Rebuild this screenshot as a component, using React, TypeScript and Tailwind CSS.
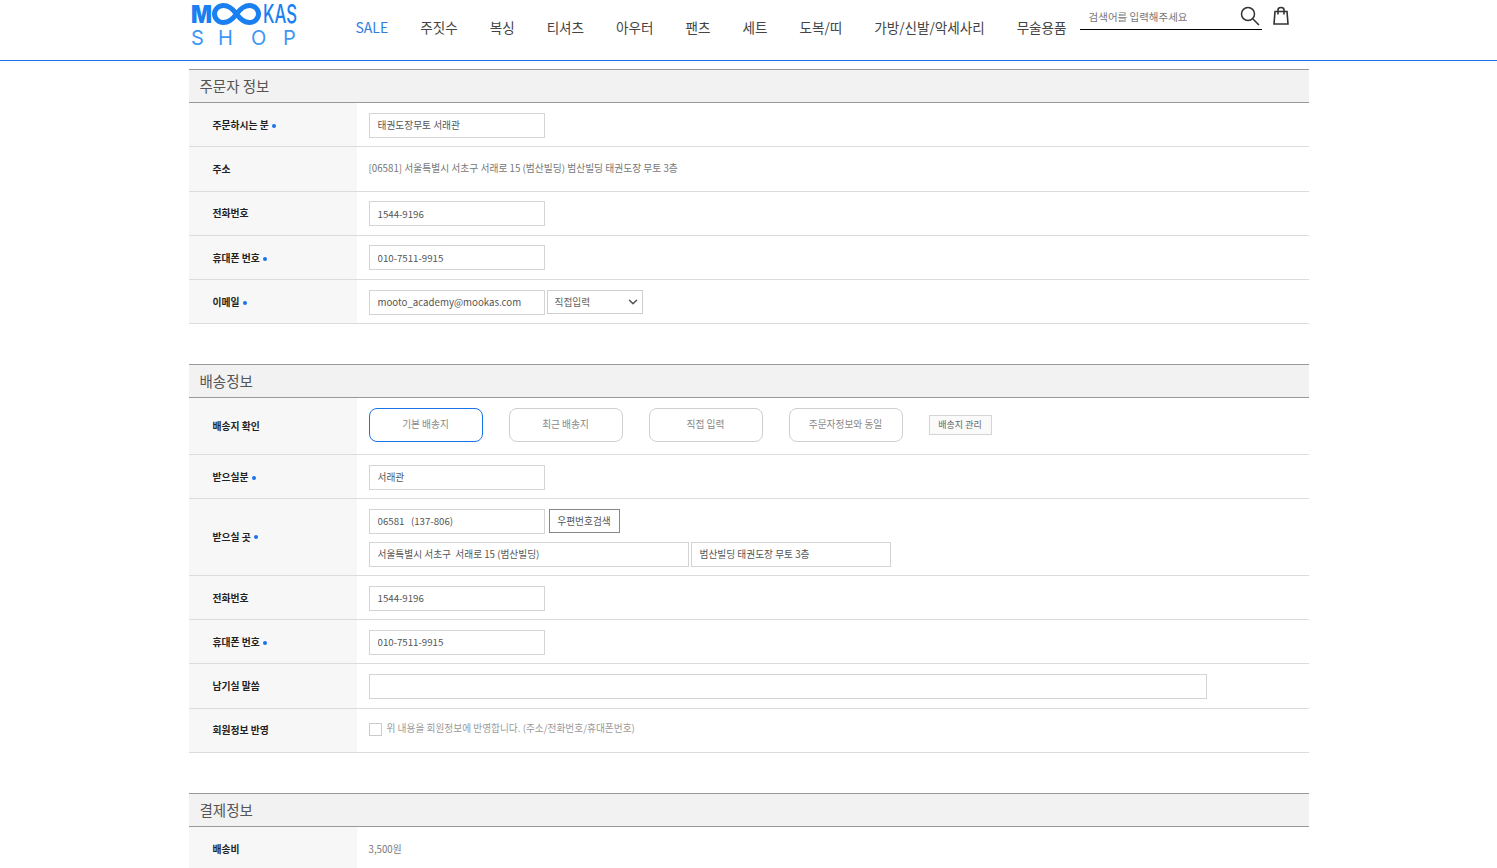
import React from "react";
import { ChevronDown } from "lucide-react";

const font = { fontFamily: '"Noto Sans CJK KR", "Noto Sans", sans-serif' };

const navItems = ["SALE", "주짓수", "복싱", "티셔츠", "아우터", "팬츠", "세트", "도복/띠", "가방/신발/악세사리", "무술용품"];

const Dot = () => <span className="ml-[3px] inline-block h-[4px] w-[4px] rounded-full bg-[#1a73e8] align-middle" />;

const Field = ({ value = "", w = "w-[176px]" }: { value?: string; w?: string }) => (
  <input
    readOnly
    value={value}
    className={`${w} h-[25px] border border-[#d4d4d4] bg-white px-2 text-[9.7px] text-[#555] outline-none`}
  />
);

const Row = ({
  label,
  dot,
  h,
  down,
  labelDown,
  children,
}: {
  label: string;
  dot?: boolean;
  h: string;
  down?: boolean;
  labelDown?: boolean;
  children: React.ReactNode;
}) => (
  <div className={`flex ${h} border-b border-[#dcdcdc]`}>
    <div
      className={`flex w-[168px] shrink-0 items-center bg-[#f7f7f7] pl-[24px] text-[9.8px] font-bold text-[#222] ${
        labelDown ? "pt-[2px]" : ""
      }`}
    >
      <span>{label}</span>
      {dot && <Dot />}
    </div>
    <div
      className={`flex flex-1 flex-col justify-center gap-2 pl-3 text-[9.7px] text-[#777] ${
        down ? "pt-[2px] [&_input]:pb-[2px]" : ""
      }`}
    >
      {children}
    </div>
  </div>
);

const SectionHead = ({ title }: { title: string }) => (
  <h2 className="h-[34px] border-y border-[#999] bg-[#f2f2f2] pl-[11px] text-[14.5px] leading-[32px] font-normal text-[#555]">
    {title}
  </h2>
);

const Pill = ({ label, active }: { label: string; active?: boolean }) => (
  <button
    className={`h-[34px] w-[114px] rounded-[8px] border pb-[2px] text-[9.7px] text-[#888] ${
      active ? "border-[#1a73e8]" : "border-[#cfcfcf]"
    }`}
  >
    {label}
  </button>
);

const Logo = () => (
  <svg width="108" height="48" viewBox="0 0 108 48" className="shrink-0 overflow-visible">
    <text x="0" y="23" fontSize="25" fontWeight="900" fill="#1a7ff0" textLength="21" lengthAdjust="spacingAndGlyphs" fontFamily="Inter, sans-serif">M</text>
    <path
      d="M45.500 14C41.500 8.500 37 5.500 32.500 5.500C27.500 5.500 23.500 9.500 23.500 14C23.500 18.500 27.500 22.500 32.500 22.500C37 22.500 41.500 19.500 45.500 14C49.500 8.500 54 5.500 58.500 5.500C63.500 5.500 67.500 9.500 67.500 14C67.500 18.500 63.500 22.500 58.500 22.500C54 22.500 49.500 19.500 45.500 14Z"
      fill="none"
      stroke="#1a7ff0"
      strokeWidth="5"
    />
    <text x="72" y="23" fontSize="25" fontWeight="500" fill="#1a7ff0" textLength="34" lengthAdjust="spacingAndGlyphs" fontFamily="Inter, sans-serif">KAS</text>
    <g fontSize="20" fontWeight="400" fill="#3d97f5" fontFamily="Inter, sans-serif">
      <text x="0" y="45">S</text>
      <text x="27" y="45">H</text>
      <text x="60" y="45">O</text>
      <text x="92" y="45">P</text>
    </g>
  </svg>
);

export default function App() {
  return (
    <div className="h-[868px] overflow-hidden bg-white" style={font}>
      <header className="h-[61px] border-b border-[#1a73e8]">
        <div className="mx-auto flex w-[1120px] items-start pl-[2px]">
          <Logo />
          <nav className="flex gap-[32px] pt-[17px] pl-[57px] text-[13.57px] leading-[20px] whitespace-nowrap text-[#444]">
            {navItems.map((item) => (
              <span key={item} className={item === "SALE" ? "text-[14px] text-[#2f7de1]" : ""}>
                {item}
              </span>
            ))}
          </nav>
          <div className="ml-[13px] flex h-[30px] w-[182px] shrink-0 items-center justify-between border-b border-black pr-[2px] pl-[9px] text-[10.500px] text-[#777]">
            <span className="pt-1">검색어를 입력해주세요</span>
            <svg width="20" height="20" viewBox="0 0 20 20" fill="none" stroke="#333" strokeWidth="1.5" className="mt-[2px]">
              <circle cx="8" cy="8" r="6.500" />
              <path d="M13 13l6 6" />
            </svg>
          </div>
          <svg width="18" height="20" viewBox="0 0 18 20" fill="none" stroke="#333" strokeWidth="1.6" className="mt-[6px] ml-[10px]">
            <path d="M3 5.500h12l1 12.500H2z" />
            <path d="M6 8.500V4C6 2.500 7 1.500 9 1.500s3 1 3 2.500v4.500" />
          </svg>
        </div>
      </header>

      <main className="mx-auto w-[1120px] pt-2">
        <SectionHead title="주문자 정보" />
        <Row label="주문하시는 분" dot h="h-[44px]" down labelDown>
          <Field value="태권도장무토 서래관" />
        </Row>
        <Row label="주소" h="h-[45px]">
          <p className="pb-px text-[9.76px]">[06581] 서울특별시 서초구 서래로 15 (범산빌딩) 범산빌딩 태권도장 무토 3층</p>
        </Row>
        <Row label="전화번호" h="h-[44px]">
          <Field value="1544-9196" />
        </Row>
        <Row label="휴대폰 번호" dot h="h-[44px]" labelDown>
          <Field value="010-7511-9915" />
        </Row>
        <Row label="이메일" dot h="h-[44px]" down labelDown>
          <div className="flex gap-[2px]">
            <Field value="mooto_academy@mookas.com" />
            <div className="relative">
              <select className="h-[24px] w-[96px] appearance-none border border-[#cfcfcf] bg-white pl-[7px] text-[9.7px] text-[#666] outline-none">
                <option>직접입력</option>
              </select>
              <ChevronDown size={14} strokeWidth={2.6} className="absolute top-[5px] right-[3px] text-[#555]" />
            </div>
          </div>
        </Row>

        <div className="mt-10">
          <SectionHead title="배송정보" />
        </div>
        <Row label="배송지 확인" h="h-[57px]">
          <div className="-mt-[2px] flex items-center gap-[26px]">
            <Pill label="기본 배송지" active />
            <Pill label="최근 배송지" />
            <Pill label="직접 입력" />
            <Pill label="주문자정보와 동일" />
            <button className="h-[20px] w-[63px] border border-[#d4d4d4] bg-[#fafafa] pb-px text-[9px] text-[#666]">
              배송지 관리
            </button>
          </div>
        </Row>
        <Row label="받으실분" dot h="h-[44px]" down labelDown>
          <Field value="서래관" />
        </Row>
        <Row label="받으실 곳" dot h="h-[77px]" down>
          <div className="flex gap-1">
            <Field value="06581   (137-806)" />
            <button className="h-[24px] w-[71px] border border-[#888] bg-white text-[9.7px] text-[#555]">
              우편번호검색
            </button>
          </div>
          <div className="flex gap-[2px]">
            <Field w="w-[320px]" value="서울특별시 서초구  서래로 15 (범산빌딩)" />
            <Field w="w-[200px]" value="범산빌딩 태권도장 무토 3층" />
          </div>
        </Row>
        <Row label="전화번호" h="h-[44px]" down labelDown>
          <Field value="1544-9196" />
        </Row>
        <Row label="휴대폰 번호" dot h="h-[44px]" down labelDown>
          <Field value="010-7511-9915" />
        </Row>
        <Row label="남기실 말씀" h="h-[45px]">
          <Field w="w-[838px]" />
        </Row>
        <Row label="회원정보 반영" h="h-[44px]">
          <label className="-mt-[2px] flex items-center gap-[5px] text-[#999]">
            <input type="checkbox" className="h-[13px] w-[13px] appearance-none border border-[#ccc] bg-white" />
            <span className="-mt-[2px]">위 내용을 회원정보에 반영합니다. (주소/전화번호/휴대폰번호)</span>
          </label>
        </Row>

        <div className="mt-10">
          <SectionHead title="결제정보" />
        </div>
        <Row label="배송비" h="h-[44px]" labelDown>
          <p className="pt-[2px]">3,500원</p>
        </Row>
      </main>
    </div>
  );
}
